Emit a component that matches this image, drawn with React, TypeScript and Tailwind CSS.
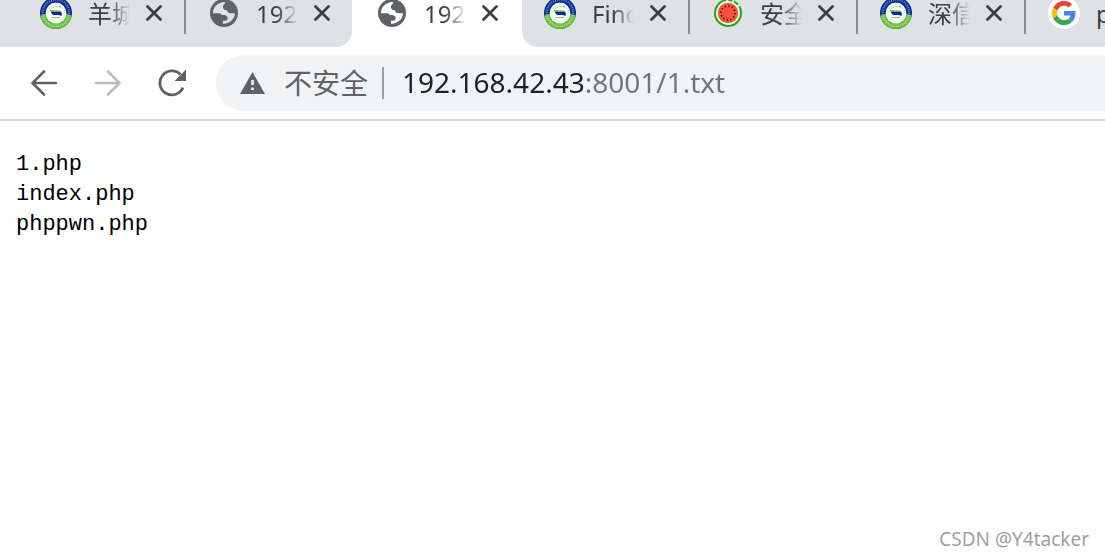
import React from "react";

type IconName = "emblem" | "globe" | "melon" | "google";

function Emblem() {
  return (
    <svg viewBox="0 0 32 32" className="size-8" aria-hidden="true">
      <circle cx="16" cy="16" r="16" fill="#0b2f92" />
      <path d="M.2 18.500 5 17h22l4.800 1.500A16 16 0 0 1 .2 18.500Z" fill="#6cc241" />
      <circle cx="16" cy="16" r="13.300" fill="none" stroke="#fff" strokeOpacity=".45" strokeWidth="1.800" strokeDasharray="1.100 1.100" />
      <circle cx="16" cy="16" r="10.400" fill="#fff" />
      <circle cx="16" cy="16" r="8.400" fill="none" stroke="#e3eaef" strokeWidth="1" />
      <path d="M10.500 12.200c1.500-2 4-2.400 8-2.600" stroke="#b8dca6" strokeWidth="1" fill="none" />
      <path d="M10 12.600c1.500 1.200 4 .8 10.500.9v1.300H11c-.8-.5-1-1.300-1-2.200Z" fill="#53b733" />
      <path d="M11 14.800h10c1.200 1 1 3.200.3 4.200-2-1-5.300-.8-7.300-.9-1.800-.1-2.800-1.600-3-3.300Z" fill="#102a83" />
      <path d="M11.500 20.300c3 .8 6 .6 8.500-.3" stroke="#7cc653" strokeWidth="1" fill="none" />
      <circle cx="20" cy="9.600" r=".9" fill="#53b733" />
    </svg>
  );
}

function Globe() {
  return (
    <svg viewBox="0 0 84 84" className="size-7" aria-hidden="true">
      <circle cx="42" cy="42" r="42" fill="#5f6368" />
      <path
        d="M9 43C8 27 21 10 44 9l2 3c-4 4-8 8-7 14 1 5 6 8 12 8 1 6 4 9 10 9h14c-1 17-14 30-35 32l-2-10h7c6 0 8-3 8-8 0-6-5-9-12-9h-6c-2-4-5-5-9-5Z"
        fill="currentColor"
      />
    </svg>
  );
}

function Melon() {
  return (
    <svg viewBox="0 0 28 28" className="size-7" aria-hidden="true">
      <circle cx="14" cy="14" r="13" fill="#f3f6ee" />
      <g transform="rotate(-8 14 14)">
        <circle cx="14" cy="14" r="13" fill="none" stroke="#21a80d" strokeWidth="2" strokeDasharray="61 2 4 2 5 2 5.680 0" />
      </g>
      <circle cx="14" cy="14" r="10.200" fill="#f4533b" />
      <circle cx="14" cy="14" r="7" fill="none" stroke="#32150f" strokeWidth="1.600" strokeDasharray="1.400 2.264" />
    </svg>
  );
}

function Google() {
  return (
    <svg viewBox="-8 -8 64 64" className="size-8" aria-hidden="true">
      <circle cx="24" cy="24" r="32" fill="#fff" />
      <path fill="#EA4335" d="M24 9.500c3.540 0 6.710 1.220 9.210 3.600l6.850-6.850C35.900 2.380 30.470 0 24 0 14.620 0 6.510 5.380 2.560 13.220l7.980 6.190C12.430 13.720 17.740 9.500 24 9.500z" />
      <path fill="#4285F4" d="M46.980 24.550c0-1.570-.15-3.090-.38-4.550H24v9.020h12.940c-.58 2.960-2.260 5.480-4.780 7.180l7.730 6c4.510-4.180 7.090-10.360 7.090-17.650z" />
      <path fill="#FBBC05" d="M10.530 28.590A14.500 14.500 0 0 1 9.770 24c0-1.600.27-3.140.76-4.590l-7.980-6.190A23.900 23.900 0 0 0 0 24c0 3.880.92 7.540 2.560 10.780z" />
      <path fill="#34A853" d="M24 48c6.480 0 11.930-2.130 15.890-5.810l-7.730-6c-2.150 1.450-4.920 2.300-8.160 2.300-6.260 0-11.570-4.220-13.470-9.910l-7.980 6.190C6.510 42.620 14.620 48 24 48z" />
    </svg>
  );
}

const icons: Record<IconName, () => React.JSX.Element> = {
  emblem: Emblem,
  globe: Globe,
  melon: Melon,
  google: Google,
};

function Tab({ icon, title, active = false, divider = false, last = false }: { icon: IconName; title: string; active?: boolean; divider?: boolean; last?: boolean }) {
  const Icon = icons[icon];
  return (
    <div className={`flex h-7 w-[168px] shrink-0 items-center pl-[22px] ${active ? "text-white" : "text-[#dee1e6]"}`}>
      <button type="button" role="tab" aria-selected={active} className="flex items-center">
        <span className="flex w-8 justify-center pb-0.5">
          <Icon />
        </span>
        <span
          className={`ml-4 h-8 w-[42px] overflow-hidden text-left text-[24px] leading-8 whitespace-nowrap text-[#3c4043] ${last ? "" : "[mask-image:linear-gradient(to_right,black_50%,transparent_100%)]"}`}
        >
          {title}
        </span>
      </button>
      <button type="button" aria-label="关闭" className="ml-4 pb-0.5 text-[#3c4043]">
        <svg viewBox="0 0 16 16" className="size-4" fill="none" stroke="currentColor" strokeWidth="2.800" strokeLinecap="round" aria-hidden="true">
          <path d="M1.500 1.500l13 13M14.500 1.500l-13 13" />
        </svg>
      </button>
      {divider && <span className="ml-auto h-10 w-0.5 bg-[#8b8e92]" />}
    </div>
  );
}

export default function App() {
  return (
    <div className="flex min-h-screen flex-col overflow-hidden bg-white font-['Noto_Sans','Noto_Sans_CJK_SC',sans-serif]">
      <div role="tablist" className="flex h-[47px] overflow-hidden">
        <div className="flex w-[352px] shrink-0 rounded-br-2xl bg-[#dee1e6] pl-[18px]">
          <Tab icon="emblem" title="羊城" divider />
          <Tab icon="globe" title="192" />
        </div>
        <div className="w-[170px] shrink-0 pl-0.5">
          <Tab icon="globe" title="192" active />
        </div>
        <div className="flex min-w-0 flex-1 overflow-hidden rounded-bl-2xl bg-[#dee1e6]">
          <Tab icon="emblem" title="Find" divider />
          <Tab icon="melon" title="安全" divider />
          <Tab icon="emblem" title="深信" divider />
          <Tab icon="google" title="php" last />
        </div>
      </div>

      <div className="flex items-center border-b-2 border-[#dadce0] py-2 pl-[30px]">
        <div className="flex shrink-0 items-center gap-9 text-[#5f6368]">
          <button type="button" aria-label="后退">
            <svg viewBox="0 0 28 28" className="size-7" fill="none" stroke="currentColor" strokeWidth="2.600" strokeLinecap="round" aria-hidden="true">
              <path d="M26 14H2.500M14 2.500 2.500 14 14 25.500" />
            </svg>
          </button>
          <button type="button" aria-label="前进" className="text-[#babcbe]">
            <svg viewBox="0 0 28 28" className="size-7" fill="none" stroke="currentColor" strokeWidth="2.600" strokeLinecap="round" aria-hidden="true">
              <path d="M2 14h23.500M14 2.500 25.500 14 14 25.500" />
            </svg>
          </button>
          <button type="button" aria-label="重新加载">
            <svg viewBox="0 0 28 28" className="size-7" aria-hidden="true">
              <path d="M25 18.500A12 12 0 1 1 22.500 5.500" fill="none" stroke="currentColor" strokeWidth="2.800" />
              <path d="M28 .5V12H16.500Z" fill="currentColor" />
            </svg>
          </button>
        </div>
        <div className="ml-[30px] flex h-14 min-w-0 flex-1 items-center rounded-l-full bg-[#f1f3f4] pl-6 text-[28px]">
          <button type="button" className="flex shrink-0 items-center gap-[18px] text-[#5f6368]">
            <svg viewBox="0 0 26 22" className="h-[22px] w-[26px]" aria-hidden="true">
              <path d="M12.500 0 25 22H0Z" fill="currentColor" />
              <path d="M11.200 8h2.600v5h-2.600ZM11.200 15.500h2.600V18h-2.600Z" fill="#f1f3f4" />
            </svg>
            <span>不安全</span>
          </button>
          <span className="mx-[14px] h-8 w-0.5 shrink-0 bg-[#9b9da0]" />
          <input
            type="text"
            aria-label="地址"
            defaultValue="192.168.42.43:8001/1.txt"
            className="ml-1 min-w-0 flex-1 bg-[linear-gradient(to_right,#202124_184px,#70757a_184px)] bg-clip-text pb-0.5 text-transparent outline-none"
          />
        </div>
      </div>

      <main className="flex-1 px-4 pt-[29px]">
        <pre className="font-['Liberation_Mono',monospace] text-[22px] leading-[30px] text-black">
          {"1.php\nindex.php\nphppwn.php"}
        </pre>
      </main>
      <footer className="px-4 pb-1 text-right text-[19px] text-[#a0a0a0]">CSDN @Y4tacker</footer>
    </div>
  );
}
